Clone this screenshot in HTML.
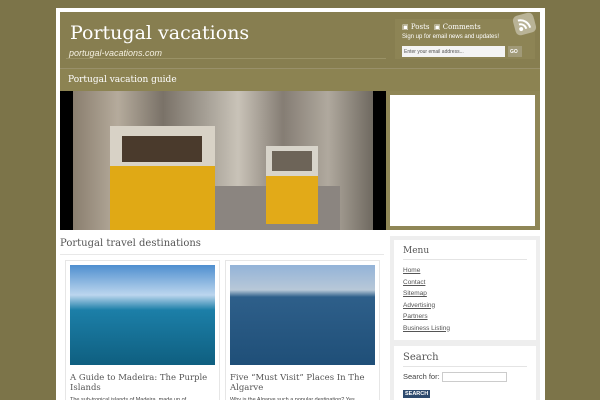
<!DOCTYPE html>
<html><head><meta charset="utf-8"><style>
*{margin:0;padding:0;box-sizing:border-box}
html,body{width:600px;height:400px;overflow:hidden}
body{background:#7c7449;font-family:"Liberation Sans",sans-serif;position:relative}
.frame{position:absolute;left:56px;top:8px;width:489px;height:392px;background:#fff}
.hdr{position:absolute;left:60px;top:12px;width:480px;height:56px;background:#877e50}
.title{position:absolute;left:70px;top:22px;font-family:"DejaVu Serif","Liberation Serif",serif;font-size:19px;color:#fff}
.hline{position:absolute;left:66px;top:58px;width:320px;height:1px;background:#9a9267}
.sub{position:absolute;left:69px;top:48px;font-size:9px;font-style:italic;color:#f4f0e0}
.sbox{position:absolute;left:395px;top:19px;width:140px;height:40px;background:#8d8455}
.nav{position:absolute;left:60px;top:68px;width:480px;height:23px;background:#8c8352;border-top:1px solid #99906a}
.nav span{position:absolute;left:8px;top:6px;font-family:"DejaVu Serif",serif;font-size:9px;color:#fff}
.slide{position:absolute;left:60px;top:91px;width:480px;height:139px;background:#8f8656}
.photo{position:absolute;left:60px;top:91px;width:326px;height:139px;background:#000;overflow:hidden}
.wbox{position:absolute;left:390px;top:95px;width:145px;height:131px;background:#fff}
.side{position:absolute;left:390px;top:236px;width:150px;height:170px;background:#eeeeee;padding:4px}
.card{background:#fff;padding:6px 9px;margin-bottom:6px}
.card h3{font-family:"DejaVu Serif",serif;font-weight:normal;font-size:9px;color:#555;border-bottom:1px solid #e4e4e4;padding-bottom:3px;margin-bottom:5px}
.card a{display:block;font-size:6.5px;color:#555;text-decoration:underline;line-height:11.5px}
.post{position:absolute;top:260px;width:155px;height:150px;border:1px solid #e6e6e6;background:#fff;padding:4px}
.post h4{font-family:"DejaVu Serif",serif;font-weight:normal;font-size:8.5px;color:#555;line-height:10px;margin-top:8px}
.post p{font-size:5.5px;color:#444;margin-top:4px}
</style></head><body>
<div class="frame"></div>
<div class="hdr"></div>
<div class="title">Portugal vacations</div>
<div class="hline"></div>
<div class="sub">portugal-vacations.com</div>
<div class="sbox"></div>
<div style="position:absolute;left:402px;top:23px;font-family:'DejaVu Serif',serif;font-size:7px;color:#fff">▣ Posts &nbsp;▣ Comments</div>
<div style="position:absolute;left:402px;top:34px;font-size:6px;color:#fff">Sign up for email news and updates!</div>
<div style="position:absolute;left:402px;top:46px;width:103px;height:11px;background:#f4f4f4;font-size:5px;color:#555;padding:3px 2px">Enter your email address...</div>
<div style="position:absolute;left:508px;top:46px;width:14px;height:11px;background:#a19a78;font-size:5px;color:#fff;font-weight:bold;padding:3px 2px">GO</div>
<div style="position:absolute;left:514px;top:14px;width:21px;height:20px;background:#b9b396;border-radius:5px;transform:rotate(-15deg)"><svg width="21" height="20" viewBox="0 0 21 20"><circle cx="6" cy="14" r="2" fill="#fff"/><path d="M5 9a6 6 0 0 1 6 6M5 5a10 10 0 0 1 10 10" stroke="#fff" stroke-width="2" fill="none"/></svg></div>
<div class="nav"><span>Portugal vacation guide</span></div>
<div class="slide"></div>
<div class="photo">
<div style="position:absolute;left:13px;top:0;width:300px;height:139px;background:linear-gradient(90deg,#8a7e6e 0,#b5ab9c 15%,#7a7268 30%,#a8a298 45%,#c9c3b8 55%,#857d74 70%,#b0a99e 85%,#6f6960 100%)"></div>
<div style="position:absolute;left:150px;top:95px;width:130px;height:44px;background:#8b8580"></div>
<div style="position:absolute;left:50px;top:35px;width:105px;height:104px;background:#e0a915;border-top:40px solid #d8d2c6"></div>
<div style="position:absolute;left:62px;top:45px;width:80px;height:26px;background:#4a3a2c"></div>
<div style="position:absolute;left:206px;top:55px;width:52px;height:78px;background:#e2aa18;border-top:30px solid #d8d4ca"></div>
<div style="position:absolute;left:212px;top:60px;width:40px;height:20px;background:#6d6458"></div>
</div>
<div class="wbox"></div>
<div style="position:absolute;left:60px;top:238px;font-family:'DejaVu Serif',serif;font-size:10px;color:#555">Portugal travel destinations</div>
<div style="position:absolute;left:60px;top:254px;width:324px;height:1px;background:#e8e8e8"></div>
<div class="post" style="left:65px"><div style="height:100px;background:linear-gradient(180deg,#4f8fcf 0,#bcd6ee 30%,#1c7fa8 45%,#0f5f80 100%)"></div><h4>A Guide to Madeira: The Purple Islands</h4><p>The sub-tropical islands of Madeira, made up of</p></div>
<div class="post" style="left:225px"><div style="height:100px;background:linear-gradient(180deg,#93b3d8 0,#b8c8d8 25%,#2e5f8a 32%,#1f4f78 100%)"></div><h4>Five “Must Visit” Places In The Algarve</h4><p>Why is the Algarve such a popular destination? Yes,</p></div>
<div class="side">
<div class="card"><h3>Menu</h3><a>Home</a><a>Contact</a><a>Sitemap</a><a>Advertising</a><a>Partners</a><a>Business Listing</a></div>
<div class="card"><h3 style="font-size:10px">Search</h3><div style="font-size:7.5px;color:#444">Search for: <span style="display:inline-block;width:65px;height:10px;border:1px solid #ccc;vertical-align:middle"></span></div><div style="display:inline-block;background:#2d4a6e;color:#fff;font-size:5.5px;font-weight:bold;padding:1px 2px;margin-top:1px">SEARCH</div></div>
</div>
</body></html>
